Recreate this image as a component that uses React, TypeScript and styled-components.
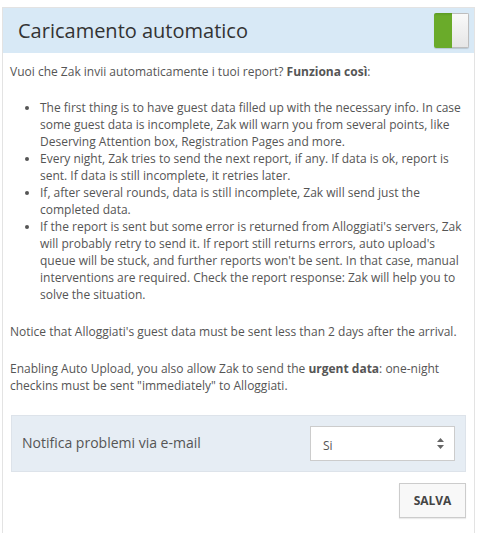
import styled, { createGlobalStyle } from "styled-components";

const Global = createGlobalStyle`
  html, body {
    margin: 0;
    padding: 0;
    background: #fff;
  }
  body {
    font-family: "Open Sans", "Liberation Sans", sans-serif;
    font-size: 12px;
    line-height: 17px;
    color: #555;
  }
`;

const Page = styled.div`
  padding: 7px 2px 0 2px;
`;

const Panel = styled.section`
  border: 1px solid #e3e3e3;
  border-bottom: none;
  min-height: 526px;
  box-sizing: border-box;
`;

const Header = styled.header`
  display: flex;
  align-items: center;
  justify-content: space-between;
  height: 45px;
  padding: 0 5px 0 15px;
  background: #d8e9f6;
`;

const Title = styled.h2`
  margin: 0;
  font-size: 20px;
  font-weight: 400;
  color: #333;
  line-height: 24px;
`;

const Toggle = styled.div`
  display: flex;
  width: 35px;
  height: 35px;
  border-radius: 2px;
  overflow: hidden;
  box-shadow: 0 1px 1px rgba(0, 0, 0, 0.15);
`;

const ToggleOn = styled.span`
  flex: 0 0 18px;
  background: linear-gradient(#5c9a23 0, #6aab2a 3px, #6aab2a 100%);
`;

const ToggleKnob = styled.span`
  flex: 1;
  border: 1px solid #bdbdbd;
  border-left: none;
  background: linear-gradient(#f9f9f9, #e6e6e6);
`;

const Body = styled.div`
  padding: 10px 8px 0 7px;
`;

const Para = styled.p<{ $gap?: number }>`
  margin: 0 0 ${(p) => p.$gap ?? 19}px;
`;

const List = styled.ul`
  margin: 0 0 20px;
  padding-left: 30px;
`;

const OptionRow = styled.div`
  display: flex;
  align-items: center;
  justify-content: space-between;
  margin: 21px 0 0 1px;
  padding: 10px;
  background: #e6edf4;
  border: 1px solid #dde3ea;
`;

const OptionLabel = styled.span`
  font-size: 14px;
  color: #555;
  margin-top: -2px;
`;

const SelectWrap = styled.div`
  position: relative;
  width: 145px;
`;

const Select = styled.select`
  appearance: none;
  width: 100%;
  height: 35px;
  padding: 4px 12px 0;
  border: 1px solid #ccc;
  border-radius: 0;
  background: #fff;
  font-family: "Open Sans", "Liberation Sans", sans-serif;
  font-size: 12px;
  color: #555;
`;

const Arrows = styled.svg`
  position: absolute;
  right: 11px;
  top: 12px;
  pointer-events: none;
`;

const Actions = styled.div`
  display: flex;
  justify-content: flex-end;
  padding: 11px 0 0;
`;

const SaveButton = styled.button`
  width: 67px;
  height: 35px;
  border: 1px solid #ccc;
  background: #f8f8f8;
  font-family: "Open Sans", "Liberation Sans", sans-serif;
  font-size: 12px;
  font-weight: 700;
  color: #444;
  box-shadow: 0 1px 1px rgba(0, 0, 0, 0.08);
  cursor: pointer;
`;

export default function App() {
  return (
    <Page>
      <Global />
      <Panel>
        <Header>
          <Title>Caricamento automatico</Title>
          <Toggle>
            <ToggleOn />
            <ToggleKnob />
          </Toggle>
        </Header>
        <Body>
          <Para $gap={19}>
            Vuoi che Zak invii automaticamente i tuoi report? <b>Funziona così</b>:
          </Para>
          <List>
            <li>
              The first thing is to have guest data filled up with the necessary info. In case
              some guest data is incomplete, Zak will warn you from several points, like
              Deserving Attention box, Registration Pages and more.
            </li>
            <li>
              Every night, Zak tries to send the next report, if any. If data is ok, report is
              sent. If data is still incomplete, it retries later.
            </li>
            <li>
              If, after several rounds, data is still incomplete, Zak will send just the
              completed data.
            </li>
            <li>
              If the report is sent but some error is returned from Alloggiati's servers, Zak
              will probably retry to send it. If report still returns errors, auto upload's
              queue will be stuck, and further reports won't be sent. In that case, manual
              interventions are required. Check the report response: Zak will help you to
              solve the situation.
            </li>
          </List>
          <Para $gap={20}>
            Notice that Alloggiati's guest data must be sent less than 2 days after the arrival.
          </Para>
          <Para $gap={0}>
            Enabling Auto Upload, you also allow Zak to send the <b>urgent data</b>: one-night
            checkins must be sent "immediately" to Alloggiati.
          </Para>
          <OptionRow>
            <OptionLabel>Notifica problemi via e-mail</OptionLabel>
            <SelectWrap>
              <Select defaultValue="si">
                <option value="si">Si</option>
                <option value="no">No</option>
              </Select>
              <Arrows width="7" height="11" viewBox="0 0 7 11">
                <path d="M3.5 0 L7 4 H0 Z" fill="#666" />
                <path d="M3.5 11 L7 7 H0 Z" fill="#666" />
              </Arrows>
            </SelectWrap>
          </OptionRow>
          <Actions>
            <SaveButton>SALVA</SaveButton>
          </Actions>
        </Body>
      </Panel>
    </Page>
  );
}
